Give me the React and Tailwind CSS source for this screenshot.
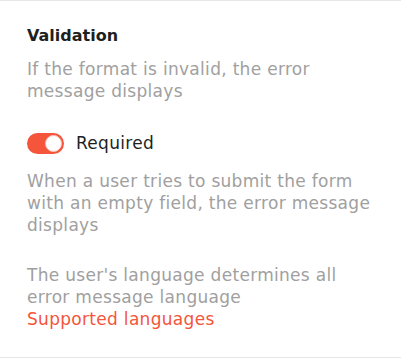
import React from "react";

export default function App() {
  return (
    <div className="w-[401px] bg-white font-['DejaVu_Sans',sans-serif]">
      <div className="border-t border-b border-[#e6e6e6] px-[27px] pt-[24px] pb-[27px]">
        <h2 className="text-[16px] leading-[22px] font-bold text-[#1f1f1f]">Validation</h2>
        <p className="mt-[11px] text-[17px] leading-[22px] tracking-[0.3px] text-[#a0a0a0]">
          If the format is invalid, the error
          <br />
          message displays
        </p>
        <div className="mt-[30px] flex h-[22px] items-center gap-[12px]">
          <button
            type="button"
            role="switch"
            aria-checked="true"
            className="relative flex h-[21px] w-[37px] shrink-0 items-center justify-end rounded-full bg-[#f4553b] px-[2px]"
          >
            <span className="block h-[17px] w-[17px] rounded-full border border-[#f7c3b9] bg-white" />
          </button>
          <span className="text-[17px] leading-[22px] tracking-[0.3px] text-[#1f1f1f]">Required</span>
        </div>
        <p className="mt-[16px] text-[17px] leading-[22px] tracking-[0.3px] text-[#a0a0a0]">
          When a user tries to submit the form
          <br />
          with an empty field, the error message
          <br />
          displays
        </p>
        <div className="mt-[28px] text-[17px] leading-[22px] tracking-[0.3px]">
          <p className="text-[#a0a0a0]">
            The user's language determines all
            <br />
            error message language
          </p>
          <a href="#" className="block text-[#f4553b]">Supported languages</a>
        </div>
      </div>
    </div>
  );
}
